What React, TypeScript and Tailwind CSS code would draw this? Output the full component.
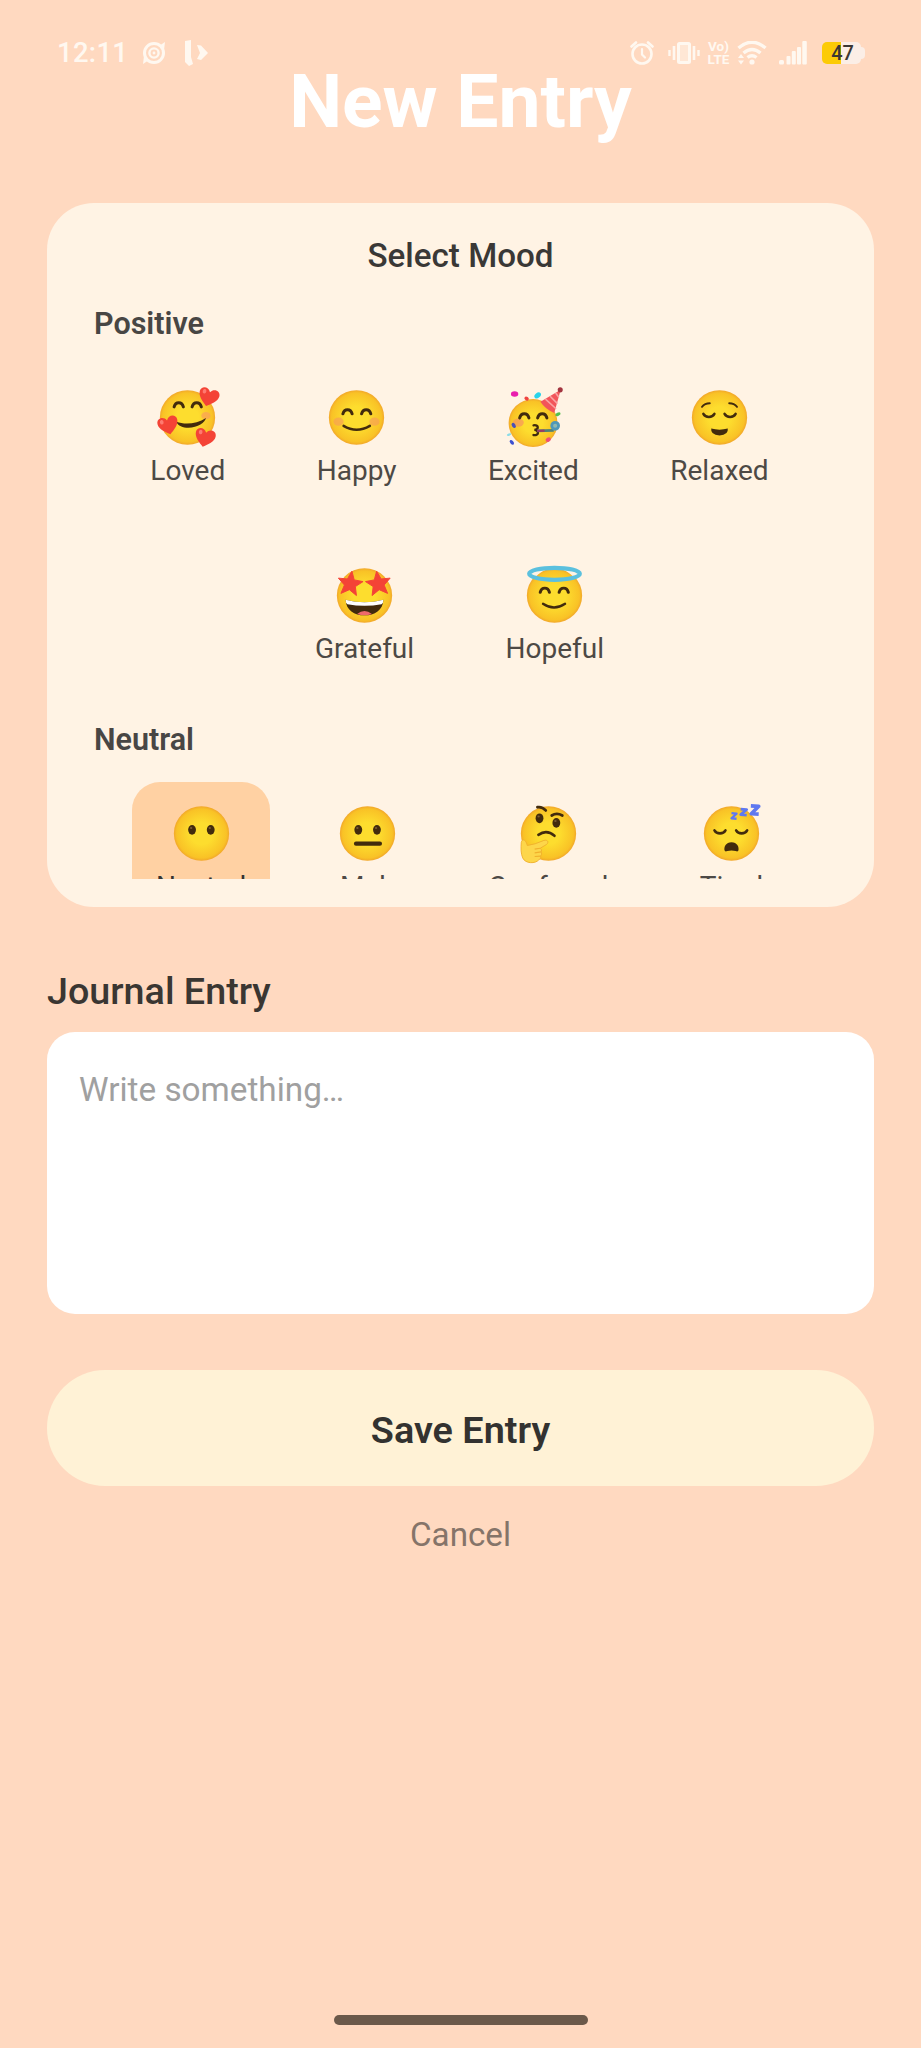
import type { ReactNode } from "react";

const INK = "#422b0d";

function HappyEye({ x, y }: { x: number; y: number }) {
  return (
    <path
      d={`M${x - 10} ${y + 5} C${x - 7} ${y - 7} ${x + 7} ${y - 7} ${x + 10} ${y + 5}`}
      fill="none"
      stroke={INK}
      strokeWidth="6.5"
      strokeLinecap="round"
    />
  );
}

function ClosedEye({ x, y }: { x: number; y: number }) {
  return (
    <path
      d={`M${x - 12} ${y - 3} C${x - 7} ${y + 6} ${x + 7} ${y + 6} ${x + 12} ${y - 3}`}
      fill="none"
      stroke={INK}
      strokeWidth="5.5"
      strokeLinecap="round"
    />
  );
}

function OpenEye({ x, y }: { x: number; y: number }) {
  return (
    <g>
      <ellipse cx={x} cy={y} rx="8.5" ry="10.5" fill={INK} />
      <ellipse cx={x - 2} cy={y - 4} rx="2.6" ry="2.2" fill="#7a5a34" />
    </g>
  );
}

function Heart({ x, y, r }: { x: number; y: number; r: number }) {
  return (
    <g transform={`translate(${x} ${y}) rotate(${r})`}>
      <path
        d="M0 21 C-9 14 -22 5 -22 -7 C-22 -19 -6 -22 0 -10 C6 -22 22 -19 22 -7 C22 5 9 14 0 21Z"
        fill="#f44336"
      />
      <ellipse cx="-12" cy="-9" rx="4" ry="5" fill="#ff7a70" />
    </g>
  );
}

function Star({ x, y, r }: { x: number; y: number; r: number }) {
  return (
    <path
      transform={`translate(${x} ${y}) rotate(${r})`}
      d="M0 -27 L7.5 -9 L27 -8 L12 5 L17 24 L0 13.5 L-17 24 L-12 5 L-27 -8 L-7.5 -9Z"
      fill="#f44336"
      stroke="#f44336"
      strokeWidth="2"
      strokeLinejoin="round"
    />
  );
}

function Emoji({ id, cx = 64, cy = 64, r = 60, children }: { id: string; cx?: number; cy?: number; r?: number; children: ReactNode }) {
  return (
    <svg viewBox="0 0 128 128" className="block h-[59px] w-[59px] overflow-visible" aria-hidden="true">
      <defs>
        <radialGradient id={id} cx="50%" cy="50%" r="50%">
          <stop offset="0.4" stopColor="#fddd2e" />
          <stop offset="0.9" stopColor="#f9c226" />
          <stop offset="1" stopColor="#f2a82a" />
        </radialGradient>
      </defs>
      <ellipse cx={cx} cy={cy} rx={r} ry={r - 1} fill={`url(#${id})`} />
      {children}
    </svg>
  );
}

const loved = (
  <Emoji id="loved">
    <ellipse cx="104" cy="60" rx="10" ry="8" fill="#f9a05a" opacity="0.7" />
    <HappyEye x={45} y={36} />
    <HappyEye x={84} y={36} />
    <path d="M40 73 C58 80 84 78 104 65 C103 74 86 86 66 86 C54 86 43 82 40 73Z" fill={INK} />
    <Heart x={110} y={19} r={16} />
    <Heart x={22} y={80} r={-14} />
    <Heart x={102} y={107} r={14} />
  </Emoji>
);

const happy = (
  <Emoji id="happy">
    <ellipse cx="25" cy="73" rx="11" ry="9" fill="#f79a5b" opacity="0.6" />
    <ellipse cx="103" cy="73" rx="11" ry="9" fill="#f79a5b" opacity="0.6" />
    <HappyEye x={44.5} y={51} />
    <HappyEye x={85} y={51} />
    <path d="M36 82 Q64 99 93 82" fill="none" stroke={INK} strokeWidth="5.5" strokeLinecap="round" />
  </Emoji>
);

const excited = (
  <Emoji id="excited" cx={63} cy={76} r={53}>
    <ellipse cx="31" cy="75" rx="12" ry="9" fill="#f79a5b" opacity="0.75" />
    <HappyEye x={44} y={60} />
    <HappyEye x={83} y={60} />
    <path d="M64 81 C76 79 76 90 66 91 C77 92 76 104 64 102" fill="none" stroke={INK} strokeWidth="5" strokeLinecap="round" />
    <path d="M72 93 L108 92" fill="none" stroke="#4f8078" strokeWidth="6" />
    <circle cx="111" cy="82" r="7.5" fill="#8fb9b0" stroke="#4f97b8" strokeWidth="6" />
    <path d="M72 93 L88 92.500" stroke="#9c3a63" strokeWidth="5" />
    <path d="M123 4 L79 30 Q90 47 109 54Z" fill="#f2555a" />
    <path d="M112 11 L119 20 M100 18 L116 34 M90 24 L113 45" stroke="#f9a3a3" strokeWidth="3.5" />
    <circle cx="122" cy="4" r="5.5" fill="#a3343f" />
    <ellipse cx="23" cy="13" rx="8" ry="6" fill="#e91ead" />
    <ellipse cx="73" cy="16" rx="8" ry="5.5" fill="#29d3ea" transform="rotate(-40 73 16)" />
    <ellipse cx="49" cy="23" rx="5" ry="4" fill="#ef4340" transform="rotate(35 49 23)" />
    <ellipse cx="117" cy="57" rx="6" ry="3.5" fill="#52c04d" transform="rotate(-25 117 57)" />
    <ellipse cx="21" cy="81" rx="4" ry="6" fill="#4b50b8" transform="rotate(-30 21 81)" />
    <ellipse cx="17" cy="118" rx="3.5" ry="6" fill="#3c4fd0" transform="rotate(-40 17 118)" />
    <ellipse cx="96" cy="112" rx="6" ry="4.5" fill="#ef5273" transform="rotate(-30 96 112)" />
    <ellipse cx="11" cy="101" rx="5" ry="2.5" fill="#8bdce8" transform="rotate(-20 11 101)" />
  </Emoji>
);

const relaxed = (
  <Emoji id="relaxed">
    <path d="M26 41 Q32 33 43 33 M102 41 Q96 33 85 33" fill="none" stroke={INK} strokeWidth="4" strokeLinecap="round" />
    <ClosedEye x={41} y={59} />
    <ClosedEye x={87} y={59} />
    <path d="M46 88 Q64 93 82 88 Q84 102 64 103 Q44 102 46 88Z" fill={INK} />
  </Emoji>
);

const grateful = (
  <Emoji id="grateful">
    <Star x={33} y={38} r={8} />
    <Star x={94} y={38} r={-8} />
    <path d="M23 73 Q64 84 105 73 C104 96 86 107 64 107 C42 107 24 96 23 73Z" fill={INK} />
    <path d="M23 73 Q64 84 105 73 Q105 80 101 83 Q64 90 27 83 Q23 80 23 73Z" fill="#fff" />
    <path d="M48 104 Q64 91 80 104 Q64 110 48 104Z" fill="#ef6a6c" />
  </Emoji>
);

const hopeful = (
  <Emoji id="hopeful">
    <path d="M17 17 Q20 9 46 8 Q32 13 24 23 Q17 20 17 17Z M111 17 Q108 9 82 8 Q96 13 104 23 Q111 20 111 17Z" fill="#fff3e4" />
    <ellipse cx="64" cy="17" rx="55" ry="13" fill="none" stroke="#5bc0de" strokeWidth="9" />
    <HappyEye x={43} y={52} />
    <HappyEye x={84} y={52} />
    <path d="M39 82 Q63 98 87 82" fill="none" stroke={INK} strokeWidth="5" strokeLinecap="round" />
  </Emoji>
);

const neutral = (
  <Emoji id="neutral">
    <OpenEye x={43.5} y={56} />
    <OpenEye x={84} y={56} />
  </Emoji>
);

const meh = (
  <Emoji id="meh">
    <OpenEye x={44} y={56} />
    <OpenEye x={84.5} y={56} />
    <path d="M39 86 H91" stroke={INK} strokeWidth="9" strokeLinecap="round" />
  </Emoji>
);

const confused = (
  <Emoji id="confused">
    <OpenEye x={44.5} y={31} />
    <OpenEye x={81} y={41} />
    <path d="M40 7 Q50 5 58 14 M71 25 Q82 18 94 25" fill="none" stroke={INK} strokeWidth="6" strokeLinecap="round" />
    <path d="M42 67 Q60 54 77 69" fill="none" stroke={INK} strokeWidth="5.5" strokeLinecap="round" />
    <path
      d="M5 83 C7 74 15 77 18 90 Q34 88 54 79 C64 76 66 86 56 90 L46 96 Q51 99 48 104 Q51 109 47 113 Q49 119 43 121 C36 130 14 130 8 117 C4 108 4 96 5 83Z"
      fill="#fdd64a"
      stroke="#f0b02c"
      strokeWidth="2"
    />
    <path d="M34 98 L46 96 M34 106 L48 104 M34 114 L47 113" stroke="#f0b02c" strokeWidth="2.5" />
  </Emoji>
);

const tired = (
  <Emoji id="tired">
    <ClosedEye x={39} y={60} />
    <ClosedEye x={86} y={60} />
    <path d="M64 83 C76 83 81 93 79 101 Q78 104 73 102 Q64 100 55 102 Q50 104 49 101 C47 93 52 83 64 83Z" fill={INK} />
    <g fill="none" stroke="#5f78f0" strokeLinejoin="round">
      <path d="M64 20 L75 21 L64 31 L75 32" strokeWidth="5" />
      <path d="M84 11 L97 12 L84 23 L97 24" strokeWidth="6" />
      <path d="M106 4 L123 5 L107 21 L123 22" strokeWidth="8" />
    </g>
  </Emoji>
);

type Mood = { label: string; face: ReactNode; selected?: boolean };

const positiveMoods: Mood[] = [
  { label: "Loved", face: loved },
  { label: "Happy", face: happy },
  { label: "Excited", face: excited },
  { label: "Relaxed", face: relaxed },
  { label: "Grateful", face: grateful },
  { label: "Hopeful", face: hopeful },
];

const neutralMoods: Mood[] = [
  { label: "Neutral", face: neutral, selected: true },
  { label: "Meh", face: meh },
  { label: "Confused", face: confused },
  { label: "Tired", face: tired },
];

function MoodGroup({ title, moods }: { title: string; moods: Mood[] }) {
  return (
    <section className="shrink-0">
      <h3 className="text-[30.5px] leading-[38px] font-semibold text-[#484644]">{title}</h3>
      <div className="mt-[23px] flex flex-wrap justify-center gap-x-[43.5px] gap-y-[47px] pr-[2px]">
        {moods.map((m) => (
          <button
            key={m.label}
            className={
              m.selected
                ? "flex h-[131px] flex-col items-center rounded-[28px] bg-[#ffd1a3] px-[24px] pt-[22px]"
                : "flex h-[131px] flex-col items-center px-[24px] pt-[22px]"
            }
          >
            {m.face}
            <span
              className={
                m.selected
                  ? "mt-[7px] text-[28px] leading-[34px] text-[#333]"
                  : "mt-[7px] text-[28px] leading-[34px] text-[#4d4945]"
              }
            >
              {m.label}
            </span>
          </button>
        ))}
      </div>
    </section>
  );
}

function StatusBar() {
  return (
    <div className="flex h-[66px] shrink-0 items-start justify-between pt-[40px] pr-[56px] pl-[57px] text-[#fff8f0]">
      <div className="flex h-[26px] items-center">
        <span className="w-[70px] text-[27.5px] leading-[26px] font-medium tracking-[0.3px]">12:11</span>
        <svg viewBox="0 0 24 24" className="ml-[15px] h-6 w-6" fill="none" stroke="currentColor">
          <circle cx="12" cy="12" r="9.5" strokeWidth="3" />
          <circle cx="12" cy="12" r="4.6" strokeWidth="2.4" />
          <circle cx="12" cy="12" r="1.4" fill="currentColor" stroke="none" />
          <path d="M17 5 L23 1 L22 9Z M7 19 L1 23 L2 15Z" fill="currentColor" stroke="none" />
        </svg>
        <svg viewBox="0 0 24 26" className="ml-[18px] h-[26px] w-6" fill="currentColor">
          <path d="M1 1 L7 0 V17 L9 24 L5 26 L1 22Z" />
          <path d="M13 5 L17 5.500 L24 13 L17 20 L13 19 L16 13Z" />
        </svg>
      </div>
      <div className="flex h-[26px] items-center">
        <svg viewBox="0 0 24 24" className="h-6 w-6" fill="none" stroke="currentColor" strokeLinecap="round">
          <circle cx="12" cy="13" r="9.5" strokeWidth="2.6" />
          <path d="M12 8 V13.5 L15 16.5" strokeWidth="2.2" />
          <path d="M1.5 5.5 L6 1.5 M22.5 5.5 L18 1.5" strokeWidth="2.6" />
        </svg>
        <svg viewBox="0 0 32 24" className="ml-[14px] h-6 w-8" fill="none" stroke="currentColor">
          <rect x="10.5" y="2.5" width="11" height="19" rx="1" strokeWidth="3" fill="currentColor" fillOpacity="0.45" />
          <path d="M6 5 V19 M26 5 V19" strokeWidth="2.6" />
          <path d="M1.5 9 V15 M30.5 9 V15" strokeWidth="2.4" />
        </svg>
        <div className="ml-[6px] flex w-[25px] flex-col items-center text-[13.5px] leading-[13px] font-bold">
          <span>Vo)</span>
          <span>LTE</span>
        </div>
        <svg viewBox="0 0 30 24" className="ml-[6px] h-6 w-[30px]" fill="none" stroke="currentColor" strokeWidth="3.4">
          <path d="M1.5 7 Q15 -4.500 28.500 7" />
          <path d="M6.500 12 Q15 5 23.500 12" />
          <path d="M10.500 16.500 Q15 13 19.500 16.500" />
          <circle cx="15" cy="21" r="2.6" fill="currentColor" stroke="none" />
          <path d="M1 17 L4 13 L7 17Z M1 19.500 L4 23.500 L7 19.500Z" fill="currentColor" stroke="none" />
        </svg>
        <svg viewBox="0 0 28 24" className="ml-[12px] h-6 w-7" fill="currentColor">
          <rect x="0" y="19" width="5" height="4.500" rx="1.500" />
          <rect x="7.500" y="15" width="4" height="8.500" rx="1" />
          <rect x="12.800" y="10" width="4" height="13.500" rx="1" />
          <rect x="18" y="6" width="4" height="17.500" rx="1" />
          <rect x="23.300" y="0" width="4.500" height="23.500" rx="1" />
        </svg>
        <div className="ml-[15px] flex items-center">
          <div className="flex h-[22px] w-[39px] items-center justify-center rounded-[5px] bg-linear-to-r from-[#fccb05] from-50% to-[#fbeee6] to-50% pl-[2px] text-[20px] leading-[22px] font-medium text-[#3b3833]">
            47
          </div>
          <div className="h-[12px] w-[4px] rounded-r-[4px] bg-[#fbeee6]" />
        </div>
      </div>
    </div>
  );
}

export default function App() {
  return (
    <div className="flex h-[2048px] w-[921px] flex-col overflow-hidden bg-[#ffd9c0] font-['Roboto',sans-serif]">
      <StatusBar />
      <h1 className="shrink-0 text-center text-[75px] leading-[70px] font-bold text-white">New Entry</h1>

      <main className="mx-[47px] mt-[67px] flex flex-col">
        <div className="flex h-[704px] flex-col rounded-[47px] bg-[#fff3e4] px-[47px] pt-[32px]">
          <h2 className="text-center text-[33.2px] leading-[42px] font-medium text-[#3a3836]">Select Mood</h2>
          <div className="mt-[28px] flex h-[574px] flex-col gap-[46px] overflow-hidden">
            <MoodGroup title="Positive" moods={positiveMoods} />
            <MoodGroup title="Neutral" moods={neutralMoods} />
          </div>
        </div>

        <label className="mt-[62px] text-[37.7px] leading-[44px] font-medium text-[#3a3632]">Journal Entry</label>
        <textarea
          className="mt-[19px] block h-[282px] resize-none rounded-[28px] bg-white px-[32px] pt-[37px] text-[33.3px] leading-[42px] outline-none placeholder:text-[#a0a0a0]"
          placeholder="Write something…"
        />

        <button className="mt-[56px] h-[116px] rounded-full bg-[#fff2d6] pt-[3px] text-[37.8px] leading-[44px] font-semibold text-[#333230]">
          Save Entry
        </button>
        <button className="mt-[28px] text-[33.2px] leading-[42px] text-[#857469]">Cancel</button>
      </main>

      <div className="mx-auto mt-auto mb-[23px] h-[10px] w-[254px] rounded-full bg-[#6b594a]" />
    </div>
  );
}
